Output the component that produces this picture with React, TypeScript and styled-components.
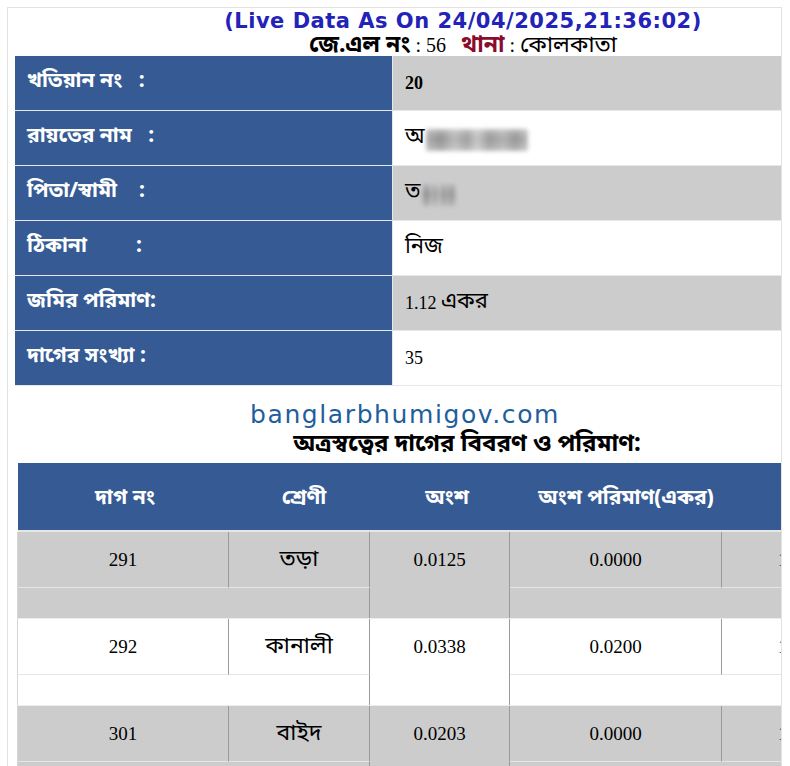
import React from "react";
import styled, { createGlobalStyle } from "styled-components";

const BLUE = "#365b94";
const GRAY = "#cccccc";
const BN = `"Noto Sans Bengali", "Noto Serif Bengali", "Lohit Bengali", "Liberation Sans", sans-serif`;
const BN_SERIF = `"Liberation Serif", "Noto Serif Bengali", "Noto Sans Bengali", "Lohit Bengali", serif`;

const Global = createGlobalStyle`
  html, body { margin: 0; padding: 0; background: #fff; }
  body { font-family: ${BN_SERIF}; color: #000; }
`;

const Frame = styled.div`
  margin: 7px 0 0 7px;
  width: 775px;
  height: 759px;
  box-sizing: border-box;
  border: 1px solid #e2e2e2;
  border-bottom: none;
  overflow: hidden;
`;

const Sheet = styled.div`
  width: 910px;
`;

const Title = styled.div`
  height: 48px;
  padding-top: 2px;
  box-sizing: border-box;
  text-align: center;
`;

const LiveLine = styled.div`
  height: 24px;
  line-height: 23px;
  font-family: "DejaVu Sans", sans-serif;
  font-weight: bold;
  font-size: 21px;
  letter-spacing: 0.5px;
  color: #2323b8;
`;

const MetaLine = styled.div`
  height: 22px;
  line-height: 22px;
  font-size: 20px;
  font-family: ${BN_SERIF};
  white-space: nowrap;
`;

const MetaKey = styled.b<{ $tone?: string }>`
  font-family: ${BN};
  font-size: 23px;
  line-height: 1;
  color: ${(p) => p.$tone || "#000"};
`;

const MetaVal = styled.span`
  font-family: ${BN};
  font-size: 23px;
  line-height: 1;
`;

const InfoGrid = styled.div`
  margin-left: 7px;
  display: grid;
  grid-template-columns: 377px 1fr;
  grid-auto-rows: 54px;
  gap: 1px;
  background: #e4e8ee;
  border-bottom: 1px solid #e4e8ee;
`;

const Label = styled.div`
  background: ${BLUE};
  color: #fff;
  font-family: ${BN};
  font-weight: bold;
  font-size: 21px;
  display: flex;
  align-items: center;
  padding-left: 12px;
  padding-bottom: 2px;
  white-space: pre;
`;

const Value = styled.div<{ $shade: boolean; $bold?: boolean }>`
  background: ${(p) => (p.$shade ? GRAY : "#fff")};
  font-family: ${BN_SERIF};
  font-size: 18px;
  font-weight: ${(p) => (p.$bold ? "bold" : "normal")};
  display: flex;
  align-items: center;
  padding-left: 12px;
  white-space: pre;
`;

const Bn = styled.span`
  font-family: ${BN};
  font-size: 22px;
  line-height: 1;
`;

const Blur = styled.span<{ $w: number }>`
  display: inline-block;
  width: ${(p) => p.$w}px;
  height: 22px;
  margin: 4px 0 0 1px;
  border-radius: 2px;
  background:
    linear-gradient(180deg, rgba(225,225,225,0.45) 0%, rgba(120,120,120,0.05) 45%, rgba(225,225,225,0.4) 100%),
    linear-gradient(90deg, #a6a6a6 0%, #858585 14%, #b4b4b4 28%, #939393 40%, #c2c2c2 50%, #8e8e8e 62%, #a9a9a9 76%, #888888 88%, #b6b6b6 100%);
  filter: blur(2px);
  opacity: 0.9;
`;

const Watermark = styled.div`
  height: 26px;
  margin: 16px 0 0 242px;
  font-family: "DejaVu Sans", sans-serif;
  font-size: 25px;
  line-height: 26px;
  color: #1f5e9c;
  letter-spacing: 1.6px;
`;

const Heading = styled.div`
  height: 26px;
  text-align: center;
  font-family: ${BN};
  font-weight: bold;
  font-size: 24px;
  line-height: 26px;
  margin-top: 4px;
  padding-left: 8px;
  white-space: nowrap;
`;

const COLS = "211px 141px 140px 212px 206px";
const HEAD_COLS = "214px 144px 142px 216px 200px";

const Ledger = styled.div`
  margin: 5px 0 0 10px;
`;

const HeadRow = styled.div`
  display: grid;
  grid-template-columns: ${HEAD_COLS};
  height: 67px;
  background: ${BLUE};
  border-bottom: 2px solid #e6e6e6;
`;

const HeadCell = styled.div<{ $left?: boolean }>`
  display: flex;
  align-items: center;
  justify-content: ${(p) => (p.$left ? "flex-start" : "center")};
  padding-left: ${(p) => (p.$left ? "47px" : "0")};
  padding-top: 4px;
  color: #fff;
  font-family: ${BN};
  font-weight: bold;
  font-size: 21px;
  white-space: nowrap;
`;

const Block = styled.div<{ $shade: boolean }>`
  display: grid;
  grid-template-columns: ${COLS};
  grid-template-rows: 56px 30px;
  background: ${(p) => (p.$shade ? GRAY : "#fff")};
  border-bottom: 1px solid #ececec;
  border-left: 1px solid #d6d6d6;
  margin-left: -1px;
`;

const Cell = styled.div<{ $col: string; $row: string; $rule?: boolean; $under?: boolean; $left?: boolean; $bn?: boolean }>`
  grid-column: ${(p) => p.$col};
  grid-row: ${(p) => p.$row};
  border-right: ${(p) => (p.$rule ? "1px solid #9a9a9a" : "none")};
  border-bottom: ${(p) => (p.$under ? "1px solid #e6e6e6" : "none")};
  display: flex;
  align-items: ${(p) => (p.$row === "1 / 3" ? "flex-start" : "center")};
  line-height: ${(p) => (p.$row === "1 / 3" ? "56px" : "normal")};
  justify-content: ${(p) => (p.$left ? "flex-start" : "center")};
  padding-left: ${(p) => (p.$left ? "56px" : "0")};
  font-family: ${(p) => (p.$bn ? BN : BN_SERIF)};
  font-size: ${(p) => (p.$bn ? "23px" : "19px")};
  white-space: nowrap;
`;

const info = [
  { label: "খতিয়ান নং   :", value: <>20</>, bold: true },
  { label: "রায়তের নাম   :", value: <><Bn>অ</Bn><Blur $w={102} /></> },
  { label: "পিতা/স্বামী    :", value: <><Bn>ত</Bn><Blur $w={34} /></> },
  { label: "ঠিকানা         :", value: <Bn>নিজ</Bn> },
  { label: "জমির পরিমাণ:", value: <>1.12 <Bn>একর</Bn></> },
  { label: "দাগের সংখ্যা :", value: <>35</> },
];

const plots = [
  { dag: "291", shreni: "তড়া", ansh: "0.0125", area: "0.0000" },
  { dag: "292", shreni: "কানালী", ansh: "0.0338", area: "0.0200" },
  { dag: "301", shreni: "বাইদ", ansh: "0.0203", area: "0.0000" },
];

export default function App() {
  return (
    <>
      <Global />
      <Frame>
        <Sheet>
          <Title>
            <LiveLine>(Live Data As On 24/04/2025,21:36:02)</LiveLine>
            <MetaLine>
              <MetaKey>জে.এল নং</MetaKey> : 56&nbsp;&nbsp; <MetaKey $tone="#8a0c2c">থানা</MetaKey> : <MetaVal>কোলকাতা</MetaVal>
            </MetaLine>
          </Title>

          <InfoGrid>
            {info.map((r, i) => (
              <React.Fragment key={i}>
                <Label>{r.label}</Label>
                <Value $shade={i % 2 === 0} $bold={r.bold}>
                  {r.value}
                </Value>
              </React.Fragment>
            ))}
          </InfoGrid>

          <Watermark>banglarbhumigov.com</Watermark>
          <Heading>অত্রস্বত্বের দাগের বিবরণ ও পরিমাণ:</Heading>

          <Ledger>
            <HeadRow>
              <HeadCell>দাগ নং</HeadCell>
              <HeadCell>শ্রেণী</HeadCell>
              <HeadCell>অংশ</HeadCell>
              <HeadCell>অংশ পরিমাণ(একর)</HeadCell>
              <HeadCell $left>মোট পরিমাণ</HeadCell>
            </HeadRow>
            {plots.map((p, i) => (
              <Block key={p.dag} $shade={i % 2 === 0}>
                <Cell $col="1" $row="1" $rule $under>{p.dag}</Cell>
                <Cell $col="2" $row="1" $rule $under $bn>{p.shreni}</Cell>
                <Cell $col="1 / 3" $row="2" $rule />
                <Cell $col="3" $row="1 / 3" $rule>{p.ansh}</Cell>
                <Cell $col="4" $row="1" $rule $under>{p.area}</Cell>
                <Cell $col="5" $row="1" $under $left>1.1200</Cell>
                <Cell $col="4 / 6" $row="2" />
              </Block>
            ))}
          </Ledger>
        </Sheet>
      </Frame>
    </>
  );
}
